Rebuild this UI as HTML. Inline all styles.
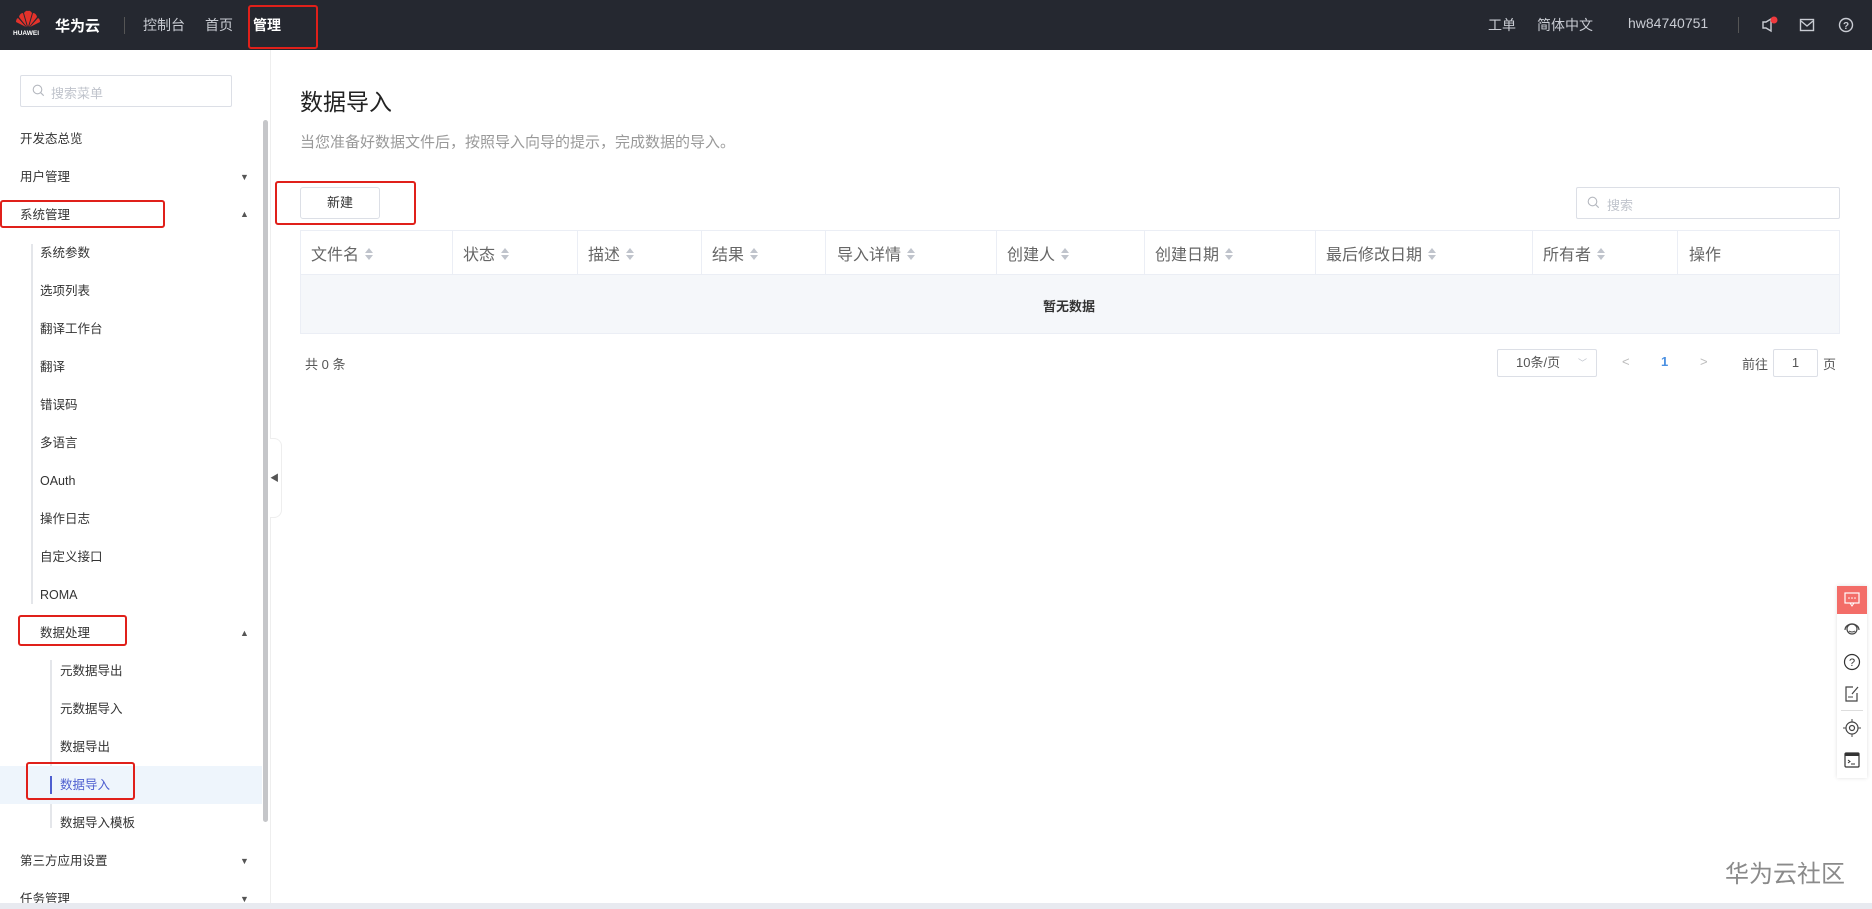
<!DOCTYPE html>
<html><head><meta charset="utf-8"><style>
*{margin:0;padding:0;box-sizing:border-box}
body{width:1872px;height:909px;position:relative;overflow:hidden;background:#fff;font-family:"Liberation Sans","Noto Sans CJK SC",sans-serif;color:#333}
.a{position:absolute;white-space:nowrap}
.hd{left:0;top:0;width:1872px;height:50px;background:#252830}
.ht{color:#c9ccd3;font-size:14px;top:15px}
.mi{font-size:12.5px;color:#333;left:20px;line-height:16px}
.m2{left:40px}.m3{left:60px}
.tri{font-size:9px;color:#555;left:240px}
.rb{border:2.5px solid #e0201a;border-radius:3px}
.th{font-size:16px;color:#666;top:241px}
.th i{display:inline-block;vertical-align:middle;margin-left:6px;width:8px;height:14px;position:relative;top:-2px}
.th i:before{content:"";position:absolute;left:0;top:1px;border:4px solid transparent;border-bottom:5px solid #c0c4cc;border-top:0}
.th i:after{content:"";position:absolute;left:0;top:8px;border:4px solid transparent;border-top:5px solid #c0c4cc;border-bottom:0}
.cs{top:231px;width:1px;height:43px;background:#ebeef5}
</style></head><body>
<div class="a hd"></div>
<svg class="a" style="left:14px;top:9px" width="28" height="20" viewBox="0 0 28 20">
<g fill="#e4322b">
<path d="M14 18 L10 4 Q12 1 14 2Z"/><path d="M14 18 L18 4 Q16 1 14 2Z"/>
<path d="M13 18 L5 8 Q6 4 9 4Z"/><path d="M15 18 L23 8 Q22 4 19 4Z"/>
<path d="M12 18 L2 13 Q2 10 4 9Z"/><path d="M16 18 L26 13 Q26 10 24 9Z"/>
</g></svg>
<div class="a" style="left:13px;top:30px;font-size:6.5px;color:#fff;font-weight:bold">HUAWEI</div>
<div class="a" style="left:55px;top:15px;font-size:15px;color:#fff;font-weight:bold">华为云</div>
<div class="a" style="left:124px;top:17px;width:1px;height:17px;background:#555"></div>
<div class="a ht" style="left:143px">控制台</div>
<div class="a ht" style="left:205px">首页</div>
<div class="a ht" style="left:253px;color:#fff;font-weight:bold">管理</div>
<div class="a rb" style="left:248px;top:5px;width:70px;height:44px"></div>
<div class="a ht" style="left:1488px">工单</div>
<div class="a ht" style="left:1537px">简体中文</div>
<div class="a ht" style="left:1628px">hw84740751</div>
<div class="a" style="left:1738px;top:17px;width:1px;height:16px;background:#555"></div>
<svg class="a" style="left:1760px;top:16px" width="18" height="18" viewBox="0 0 18 18"><path d="M3 6h3l5-3v12l-5-3H3z" fill="none" stroke="#c9ccd3" stroke-width="1.4"/><circle cx="14" cy="4" r="3.5" fill="#f0393d"/></svg>
<svg class="a" style="left:1799px;top:18px" width="16" height="14" viewBox="0 0 16 14"><rect x="1.5" y="1.5" width="13" height="11" fill="none" stroke="#c9ccd3" stroke-width="1.4"/><path d="M2 3l6 5 6-5" fill="none" stroke="#c9ccd3" stroke-width="1.4"/></svg>
<svg class="a" style="left:1838px;top:17px" width="16" height="16" viewBox="0 0 16 16"><circle cx="8" cy="8" r="6.5" fill="none" stroke="#c9ccd3" stroke-width="1.4"/><text x="8" y="12" font-size="10" text-anchor="middle" fill="#c9ccd3" font-family="Liberation Sans" font-weight="bold">?</text></svg>

<div class="a" style="left:20px;top:75px;width:212px;height:32px;border:1px solid #dcdfe6;border-radius:2px"></div>
<svg class="a" style="left:32px;top:84px" width="13" height="13" viewBox="0 0 13 13"><circle cx="5.5" cy="5.5" r="4.3" fill="none" stroke="#b5b8bf" stroke-width="1.1"/><path d="M8.7 8.7l3 3" stroke="#b5b8bf" stroke-width="1.1"/></svg>
<div class="a" style="left:51px;top:83px;font-size:13px;color:#c0c4cc">搜索菜单</div>
<div class="a" style="left:263px;top:120px;width:5px;height:702px;background:#c5c6c9;border-radius:3px"></div>
<div class="a" style="left:270px;top:50px;width:1px;height:853px;background:#eee"></div>
<div class="a" style="left:270px;top:438px;width:12px;height:80px;background:#fff;border:1px solid #eee;border-left:none;border-radius:0 8px 8px 0"></div>
<div class="a" style="left:270px;top:471px;font-size:9px;color:#555">◀</div>
<div class="a" style="left:31px;top:244px;width:2px;height:360px;background:#e4e6ea"></div>
<div class="a" style="left:50px;top:660px;width:2px;height:168px;background:#e4e6ea"></div>
<div class="a" style="left:0;top:766px;width:262px;height:38px;background:#eef5fc"></div>
<div class="a" style="left:50px;top:776px;width:2px;height:18px;background:#4e5fd0"></div>

<div class="a mi" style="top:131px">开发态总览</div>
<div class="a mi" style="top:169px">用户管理</div><div class="a tri" style="top:172px">▼</div>
<div class="a mi" style="top:207px">系统管理</div><div class="a tri" style="top:209px">▲</div>
<div class="a mi m2" style="top:245px">系统参数</div>
<div class="a mi m2" style="top:283px">选项列表</div>
<div class="a mi m2" style="top:321px">翻译工作台</div>
<div class="a mi m2" style="top:359px">翻译</div>
<div class="a mi m2" style="top:397px">错误码</div>
<div class="a mi m2" style="top:435px">多语言</div>
<div class="a mi m2" style="top:473px">OAuth</div>
<div class="a mi m2" style="top:511px">操作日志</div>
<div class="a mi m2" style="top:549px">自定义接口</div>
<div class="a mi m2" style="top:587px">ROMA</div>
<div class="a mi m2" style="top:625px">数据处理</div><div class="a tri" style="top:628px">▲</div>
<div class="a mi m3" style="top:663px">元数据导出</div>
<div class="a mi m3" style="top:701px">元数据导入</div>
<div class="a mi m3" style="top:739px">数据导出</div>
<div class="a mi m3" style="top:777px;color:#4e5fd0">数据导入</div>
<div class="a mi m3" style="top:815px">数据导入模板</div>
<div class="a mi" style="top:853px">第三方应用设置</div><div class="a tri" style="top:856px">▼</div>
<div class="a mi" style="top:891px">任务管理</div><div class="a tri" style="top:894px">▼</div>
<div class="a rb" style="left:0;top:200px;width:165px;height:28px"></div>
<div class="a rb" style="left:18px;top:615px;width:109px;height:31px"></div>
<div class="a rb" style="left:26px;top:762px;width:109px;height:38px"></div>
<div class="a" style="left:0;top:903px;width:1872px;height:6px;background:#e8eaf0"></div>

<div class="a" style="left:300px;top:83px;font-size:23px;color:#222">数据导入</div>
<div class="a" style="left:300px;top:131px;font-size:15px;color:#999">当您准备好数据文件后，按照导入向导的提示，完成数据的导入。</div>
<div class="a" style="left:300px;top:187px;width:80px;height:32px;border:1px solid #dcdfe6;border-radius:3px;font-size:13px;color:#333;text-align:center;line-height:30px">新建</div>
<div class="a rb" style="left:275px;top:181px;width:141px;height:44px"></div>
<div class="a" style="left:1576px;top:187px;width:264px;height:32px;border:1px solid #dcdfe6;border-radius:2px"></div>
<svg class="a" style="left:1587px;top:196px" width="13" height="13" viewBox="0 0 13 13"><circle cx="5.5" cy="5.5" r="4.3" fill="none" stroke="#b5b8bf" stroke-width="1.1"/><path d="M8.7 8.7l3 3" stroke="#b5b8bf" stroke-width="1.1"/></svg>
<div class="a" style="left:1607px;top:195px;font-size:13px;color:#c0c4cc">搜索</div>

<div class="a" style="left:300px;top:230px;width:1540px;height:104px;border:1px solid #ebeef5"></div>
<div class="a" style="left:301px;top:274px;width:1538px;height:59px;background:#f5f7fa;border-top:1px solid #ebeef5"></div>
<div class="a cs" style="left:452px"></div><div class="a cs" style="left:577px"></div><div class="a cs" style="left:701px"></div><div class="a cs" style="left:825px"></div><div class="a cs" style="left:996px"></div><div class="a cs" style="left:1144px"></div><div class="a cs" style="left:1315px"></div><div class="a cs" style="left:1532px"></div><div class="a cs" style="left:1677px"></div>
<div class="a th" style="left:311px">文件名<i></i></div>
<div class="a th" style="left:463px">状态<i></i></div>
<div class="a th" style="left:588px">描述<i></i></div>
<div class="a th" style="left:712px">结果<i></i></div>
<div class="a th" style="left:837px">导入详情<i></i></div>
<div class="a th" style="left:1007px">创建人<i></i></div>
<div class="a th" style="left:1155px">创建日期<i></i></div>
<div class="a th" style="left:1326px">最后修改日期<i></i></div>
<div class="a th" style="left:1543px">所有者<i></i></div>
<div class="a th" style="left:1689px">操作</div>
<div class="a" style="left:1043px;top:296px;font-size:13px;color:#333;font-weight:bold">暂无数据</div>

<div class="a" style="left:305px;top:354px;font-size:13px;color:#555">共 0 条</div>
<div class="a" style="left:1497px;top:349px;width:100px;height:28px;border:1px solid #dcdfe6;border-radius:2px;font-size:13px;color:#555;line-height:26px;padding-left:18px">10条/页<span style="position:absolute;left:80px;color:#c0c4cc;font-size:9px">﹀</span></div>
<div class="a" style="left:1622px;top:354px;font-size:13px;color:#bbb">&lt;</div>
<div class="a" style="left:1661px;top:354px;font-size:13px;color:#4a90e2;font-weight:bold">1</div>
<div class="a" style="left:1700px;top:354px;font-size:13px;color:#bbb">&gt;</div>
<div class="a" style="left:1742px;top:354px;font-size:13px;color:#555">前往</div>
<div class="a" style="left:1773px;top:349px;width:45px;height:28px;border:1px solid #dcdfe6;border-radius:2px;font-size:13px;color:#555;text-align:center;line-height:26px">1</div>
<div class="a" style="left:1823px;top:354px;font-size:13px;color:#555">页</div>

<div class="a" style="left:1837px;top:586px;width:30px;height:192px;background:#fff;box-shadow:0 0 4px rgba(0,0,0,.12)"></div>
<div class="a" style="left:1837px;top:586px;width:30px;height:28px;background:#f36d68"></div>
<svg class="a" style="left:1844px;top:592px" width="16" height="15" viewBox="0 0 16 15"><rect x="1" y="1" width="14" height="10" fill="none" stroke="#fff" stroke-width="1.2"/><path d="M6 11l2 3 2-3" fill="none" stroke="#fff"/><circle cx="5" cy="6" r=".8" fill="#fff"/><circle cx="8" cy="6" r=".8" fill="#fff"/><circle cx="11" cy="6" r=".8" fill="#fff"/></svg>
<svg class="a" style="left:1843px;top:621px" width="18" height="16" viewBox="0 0 18 16"><circle cx="9" cy="8" r="5" fill="none" stroke="#444" stroke-width="1.2"/><path d="M2 9a7 6 0 0 1 14 0" fill="none" stroke="#444" stroke-width="1.2"/><path d="M6 10q3 2 6 0" fill="none" stroke="#444"/></svg>
<svg class="a" style="left:1843px;top:653px" width="18" height="18" viewBox="0 0 18 18"><circle cx="9" cy="9" r="7.5" fill="none" stroke="#333" stroke-width="1.2"/><text x="9" y="13" font-size="11" text-anchor="middle" fill="#333" font-family="Liberation Sans">?</text></svg>
<svg class="a" style="left:1844px;top:685px" width="16" height="17" viewBox="0 0 16 17"><path d="M9 2H2v14h11V8" fill="none" stroke="#444" stroke-width="1.2"/><path d="M8 9l6-7" stroke="#444" stroke-width="1.2"/><path d="M4 12h5" stroke="#444"/></svg>
<div class="a" style="left:1841px;top:710px;width:22px;height:1px;background:#ddd"></div>
<svg class="a" style="left:1843px;top:719px" width="18" height="18" viewBox="0 0 18 18"><circle cx="9" cy="9" r="6" fill="none" stroke="#444" stroke-width="1.2"/><circle cx="9" cy="9" r="2.5" fill="none" stroke="#444" stroke-width="1.2"/><path d="M9 0v3M9 15v3M0 9h3M15 9h3" stroke="#444"/></svg>
<svg class="a" style="left:1844px;top:752px" width="16" height="16" viewBox="0 0 16 16"><rect x="1" y="1" width="14" height="14" rx="1" fill="none" stroke="#333" stroke-width="1.2"/><rect x="1" y="1" width="14" height="3" fill="#333"/><path d="M4 8l2 1.5L4 11M7 12h4" fill="none" stroke="#333"/></svg>
<div class="a" style="left:1725px;top:854px;font-size:24px;color:#8a8a8a">华为云社区</div>
</body></html>
